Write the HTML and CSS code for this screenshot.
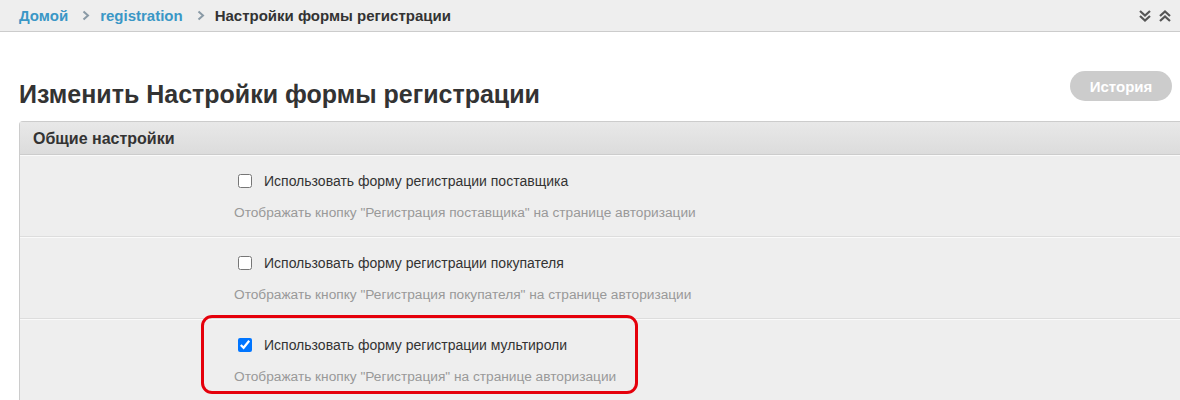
FILE: index.html
```html
<!DOCTYPE html>
<html lang="ru">
<head>
<meta charset="utf-8">
<title>Настройки формы регистрации</title>
<link rel="stylesheet" href="styles.css">
</head>
<body>
<div class="page">
  <nav class="crumbs">
    <div class="crumb-list">
      <a class="crumb-link" href="#">Домой</a>
      <svg class="sep" width="8" height="11" viewBox="0 0 8 11"><path d="M1.5 1.5 L6 5.5 L1.5 9.5" fill="none" stroke="#8a9aa6" stroke-width="2"/></svg>
      <a class="crumb-link" href="#">registration</a>
      <svg class="sep" width="8" height="11" viewBox="0 0 8 11"><path d="M1.5 1.5 L6 5.5 L1.5 9.5" fill="none" stroke="#8a9aa6" stroke-width="2"/></svg>
      <span class="crumb-current">Настройки формы регистрации</span>
    </div>
    <div class="crumb-tools">
      <svg width="14" height="14" viewBox="0 0 14 14"><path d="M2 2 L7 6.5 L12 2 M2 7 L7 11.5 L12 7" fill="none" stroke="#555" stroke-width="2.2"/></svg>
      <svg width="14" height="14" viewBox="0 0 14 14"><path d="M2 7 L7 2.5 L12 7 M2 12 L7 7.5 L12 12" fill="none" stroke="#555" stroke-width="2.2"/></svg>
    </div>
  </nav>

  <div class="content">
    <header class="title-row">
      <h1 class="title">Изменить Настройки формы регистрации</h1>
      <button class="btn-history" type="button">История</button>
    </header>

    <section class="panel">
      <div class="panel-head">Общие настройки</div>
      <div class="row">
        <label class="check-line"><input type="checkbox"><span>Использовать форму регистрации поставщика</span></label>
        <div class="help">Отображать кнопку "Регистрация поставщика" на странице авторизации</div>
      </div>
      <div class="row">
        <label class="check-line"><input type="checkbox"><span>Использовать форму регистрации покупателя</span></label>
        <div class="help">Отображать кнопку "Регистрация покупателя" на странице авторизации</div>
      </div>
      <div class="row">
        <label class="check-line"><input type="checkbox" checked><span>Использовать форму регистрации мультироли</span></label>
        <div class="help">Отображать кнопку "Регистрация" на странице авторизации</div>
      </div>
    </section>
  </div>
  <div class="highlight"></div>
</div>
</body>
</html>
```

FILE: styles.css
```css
* { box-sizing: border-box; }
html, body { margin: 0; padding: 0; background: #fff; }
body {
  font-family: "Liberation Sans", Arial, sans-serif;
  color: #333;
  overflow: hidden;
  width: 1180px;
  height: 400px;
}
.page { position: relative; width: 1180px; height: 400px; overflow: hidden; }

.crumbs {
  height: 32px;
  background: #eee;
  border-bottom: 1px solid #ccc;
  display: flex;
  align-items: center;
  justify-content: space-between;
  padding: 0 8px 0 19px;
}
.crumb-list { display: flex; align-items: center; font-size: 15px; font-weight: bold; }
.crumb-link { color: #3a97c6; text-decoration: none; }
.sep { margin: 0 10px 0 14px; }
.crumb-current { color: #333; }
.crumb-tools { display: flex; gap: 6px; align-items: center; padding-top: 1px; }

.content { padding: 0 0 0 19px; }
.title-row {
  display: flex;
  justify-content: space-between;
  align-items: flex-start;
  height: 89px;
  padding-top: 39px;
}
.title {
  margin: 8px 0 0;
  font-size: 25px;
  font-weight: bold;
  line-height: 30px;
  color: #333;
}
.btn-history {
  margin: 0 8px 0 0;
  width: 102px;
  height: 30px;
  border: none;
  border-radius: 15px;
  background: #ccc;
  color: #fff;
  font-family: inherit;
  font-weight: bold;
  font-size: 15px;
  padding: 0;
}

.panel {
  width: 1200px;
  border: 1px solid #ccc;
  border-right: none;
  border-radius: 4px 0 0 0;
  background: #eee;
}
.panel-head {
  height: 33px;
  background: linear-gradient(#e8e8e8, #dcdcdc);
  border-bottom: 1px solid #ccc;
  padding: 0 13px;
  font-size: 16px;
  font-weight: bold;
  line-height: 33px;
  color: #333;
}
.row {
  padding: 14px 0 14px 214px;
  border-top: 1px solid #fafafa;
  border-bottom: 1px solid #ddd;
  height: 82px;
}
.check-line {
  display: flex;
  align-items: center;
  height: 22px;
  font-size: 14px;
  color: #333;
}
.check-line input {
  width: 14px;
  height: 14px;
  margin: 0 12px 0 4px;
}
.help {
  margin-top: 11px;
  font-size: 13.7px;
  line-height: 20px;
  color: #999;
}

.highlight {
  position: absolute;
  left: 201px;
  top: 315px;
  width: 437px;
  height: 79px;
  border: 3px solid #e5000b;
  border-radius: 11px;
  pointer-events: none;
}
```
